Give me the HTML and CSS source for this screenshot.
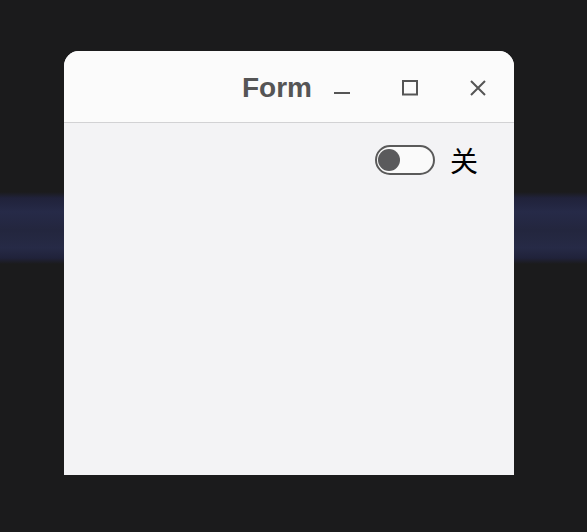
FILE: index.html
```html
<!DOCTYPE html>
<html>
<head>
<meta charset="utf-8">
<link rel="stylesheet" href="styles.css">
</head>
<body>
<div class="window">
  <div class="titlebar">
    <span class="title">Form</span>
    <span class="btn btn-min"><svg width="16" height="16" viewBox="0 0 16 16"><line x1="0" y1="13" x2="16" y2="13" stroke="#555" stroke-width="2"/></svg></span>
    <span class="btn btn-max"><svg width="16" height="16" viewBox="0 0 16 16"><rect x="1" y="1" width="14" height="13.5" fill="none" stroke="#555" stroke-width="2"/></svg></span>
    <span class="btn btn-close"><svg width="16" height="16" viewBox="0 0 16 16"><path d="M1 1 L15 15 M15 1 L1 15" stroke="#555" stroke-width="2" fill="none"/></svg></span>
  </div>
  <div class="content">
    <div class="row">
      <span class="switch"><span class="knob"></span></span>
      <span class="label">关</span>
    </div>
  </div>
</div>
</body>
</html>
```
FILE: styles.css
```css
html, body {
  margin: 0;
  padding: 0;
}
body {
  width: 587px;
  height: 532px;
  overflow: hidden;
  background: linear-gradient(to bottom,
    #1b1b1c 0px, #1b1b1c 192px,
    #20223a 198px, #262a48 212px, #23263e 230px, #262a46 248px,
    #20223a 258px, #1b1b1c 264px, #1b1b1c 532px);
  padding-top: 51px;
  box-sizing: border-box;
}
.window {
  margin-left: 64px;
  width: 450px;
  height: 424px;
  border-radius: 15px 15px 0 0;
  overflow: hidden;
  background: #f3f3f5;
  display: flex;
  flex-direction: column;
}
.titlebar {
  height: 68px;
  flex: none;
  background: #fbfbfb;
  border-bottom: 1px solid #d2d2d4;
  display: flex;
  align-items: center;
  justify-content: flex-end;
  padding-right: 28px;
  padding-top: 3px;
  box-sizing: content-box;
}
.title {
  font-family: "Liberation Sans", Arial, sans-serif;
  font-weight: bold;
  font-size: 28px;
  color: #555555;
  line-height: 32px;
  margin-right: 22px;
}
.btn {
  width: 16px;
  height: 16px;
  display: block;
}
.btn svg {
  display: block;
}
.btn-max, .btn-close {
  margin-left: 52px;
}
.content {
  flex: 1;
  background: #f3f3f5;
}
.row {
  display: flex;
  justify-content: flex-end;
  align-items: center;
  padding-top: 22px;
  padding-right: 36px;
}
.switch {
  width: 60px;
  height: 30px;
  box-sizing: border-box;
  border: 2px solid #5a5a5a;
  border-radius: 15px;
  background: #fafafa;
  display: flex;
  align-items: center;
  padding-left: 1px;
}
.knob {
  width: 22px;
  height: 22px;
  border-radius: 50%;
  background: #5a5a5c;
}
.label {
  font-family: "Noto Sans CJK SC", sans-serif;
  font-size: 28px;
  line-height: 30px;
  color: #000;
  margin-left: 15px;
}
```
